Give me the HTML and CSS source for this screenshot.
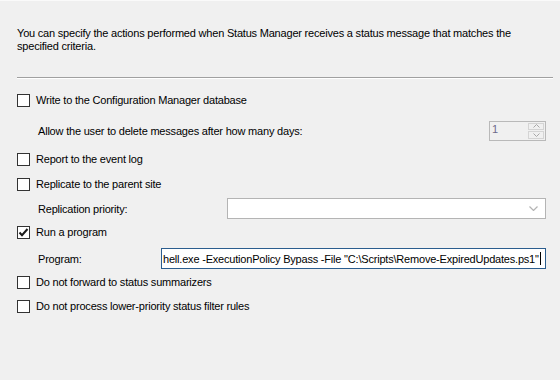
FILE: index.html
```html
<!DOCTYPE html>
<html lang="en">
<head>
    <meta charset="UTF-8">
    <title>Status Filter Rule - Actions</title>
    <link rel="stylesheet" href="styles.css">
</head>
<body>
    <div class="page">
        <p class="intro">You can specify the actions performed when Status Manager receives a status message that matches the specified criteria.</p>
        <div class="separator"></div>

        <div class="options">
            <label class="row row-write">
                <span class="check"></span>
                <span>Write to the Configuration Manager database</span>
            </label>

            <div class="row row-sub row-allow">
                <span class="sub-label">Allow the user to delete messages after how many days:</span>
                <div class="spinner">
                    <span class="spinner-value">1</span>
                    <div class="spinner-buttons">
                        <span class="spin-btn">
                            <svg width="7" height="4" viewBox="0 0 7 4"><path d="M0.5 3.5 L3.5 0.5 L6.5 3.5" fill="none" stroke="#a8a8a8" stroke-width="1"/></svg>
                        </span>
                        <span class="spin-btn">
                            <svg width="7" height="4" viewBox="0 0 7 4"><path d="M0.5 0.5 L3.5 3.5 L6.5 0.5" fill="none" stroke="#a8a8a8" stroke-width="1"/></svg>
                        </span>
                    </div>
                </div>
            </div>

            <label class="row row-report">
                <span class="check"></span>
                <span>Report to the event log</span>
            </label>

            <label class="row row-replicate">
                <span class="check"></span>
                <span>Replicate to the parent site</span>
            </label>

            <div class="row row-sub row-priority">
                <span class="sub-label">Replication priority:</span>
                <div class="combo">
                    <svg width="9" height="5" viewBox="0 0 9 5"><path d="M0.5 0.5 L4.5 4.5 L8.5 0.5" fill="none" stroke="#b4b4b4" stroke-width="1.2"/></svg>
                </div>
            </div>

            <label class="row row-run">
                <span class="check checked">
                    <svg width="11" height="11" viewBox="0 0 11 11"><path d="M1.5 5.5 L4 8.2 L9.5 2" fill="none" stroke="#1a1a1a" stroke-width="2"/></svg>
                </span>
                <span>Run a program</span>
            </label>

            <div class="row row-sub row-program">
                <span class="sub-label">Program:</span>
                <div class="textbox">
                    <span class="textbox-text">hell.exe -ExecutionPolicy Bypass -File "C:\Scripts\Remove-ExpiredUpdates.ps1"</span>
                    <span class="caret"></span>
                </div>
            </div>

            <label class="row row-forward">
                <span class="check"></span>
                <span>Do not forward to status summarizers</span>
            </label>

            <label class="row row-process">
                <span class="check"></span>
                <span>Do not process lower-priority status filter rules</span>
            </label>
        </div>
    </div>
</body>
</html>
```

FILE: styles.css
```css
/* page */
body {
    margin: 0;
    background-color: #f0f0f0;
    font-family: "Liberation Sans", Arial, sans-serif;
    font-size: 11px;
    letter-spacing: -0.2px;
    color: #000000;
}

.page {
    width: 560px;
    height: 380px;
    border-top: 1px solid #fafafa;
    box-sizing: border-box;
}

/* intro text */
.intro {
    margin: 0;
    padding: 26px 30px 0 17px;
    line-height: 13px;
    height: 26px;
}

.separator {
    margin: 24px 7px 0 17px;
    height: 1px;
    background-color: #a0a0a0;
    border-bottom: 1px solid #ffffff;
}

/* options list */
.options {
    display: flex;
    flex-direction: column;
    margin-top: 9px;
}

.row {
    display: flex;
    align-items: center;
    height: 24px;
    padding-left: 17px;
}

.row-sub {
    padding-left: 38px;
    height: 21px;
}

.row-allow { margin-top: 8px; }
.row-report { margin-top: 6px; }
.row-replicate { margin-top: 1px; }
.row-priority { margin-top: 2px; }
.row-run { margin-top: 1px; }
.row-program { margin-top: 4px; }
.row-forward { margin-top: 1px; }

/* checkbox */
.check {
    width: 11px;
    height: 11px;
    border: 1px solid #333333;
    background-color: #ffffff;
    margin-right: 6px;
    display: flex;
    align-items: center;
    justify-content: center;
    flex-shrink: 0;
}

.sub-label {
    flex-shrink: 0;
}

.row-allow .sub-label {
    flex: 1;
}

.row-priority .sub-label {
    width: 189px;
}

.row-program .sub-label {
    width: 123px;
}

/* spinner */
.spinner {
    width: 55px;
    height: 18px;
    border: 1px solid #b9b9b9;
    background-color: #f0f0f0;
    display: flex;
    margin-right: 14px;
}

.spinner-value {
    flex: 1;
    color: #6d6a8a;
    padding-left: 2px;
    line-height: 15px;
}

.spinner-buttons {
    width: 16px;
    display: flex;
    flex-direction: column;
    gap: 1px;
    padding: 1px 1px 1px 0;
}

.spin-btn {
    flex: 1;
    border: 1px solid #d4d4d4;
    background-color: #f0f0f0;
    display: flex;
    align-items: center;
    justify-content: center;
}

/* combobox */
.combo {
    width: 319px;
    height: 21px;
    box-sizing: border-box;
    border: 1px solid #b4b4b4;
    background-color: #ffffff;
    display: flex;
    align-items: center;
    justify-content: flex-end;
    padding-right: 7px;
}

/* program textbox */
.textbox {
    width: 385px;
    height: 21px;
    box-sizing: border-box;
    border: 1px solid #2b5d8e;
    background-color: #ffffff;
    display: flex;
    align-items: center;
    padding-left: 1px;
    white-space: nowrap;
}

.caret {
    width: 1px;
    height: 13px;
    background-color: #000000;
    margin-left: 1px;
    flex-shrink: 0;
}
```
